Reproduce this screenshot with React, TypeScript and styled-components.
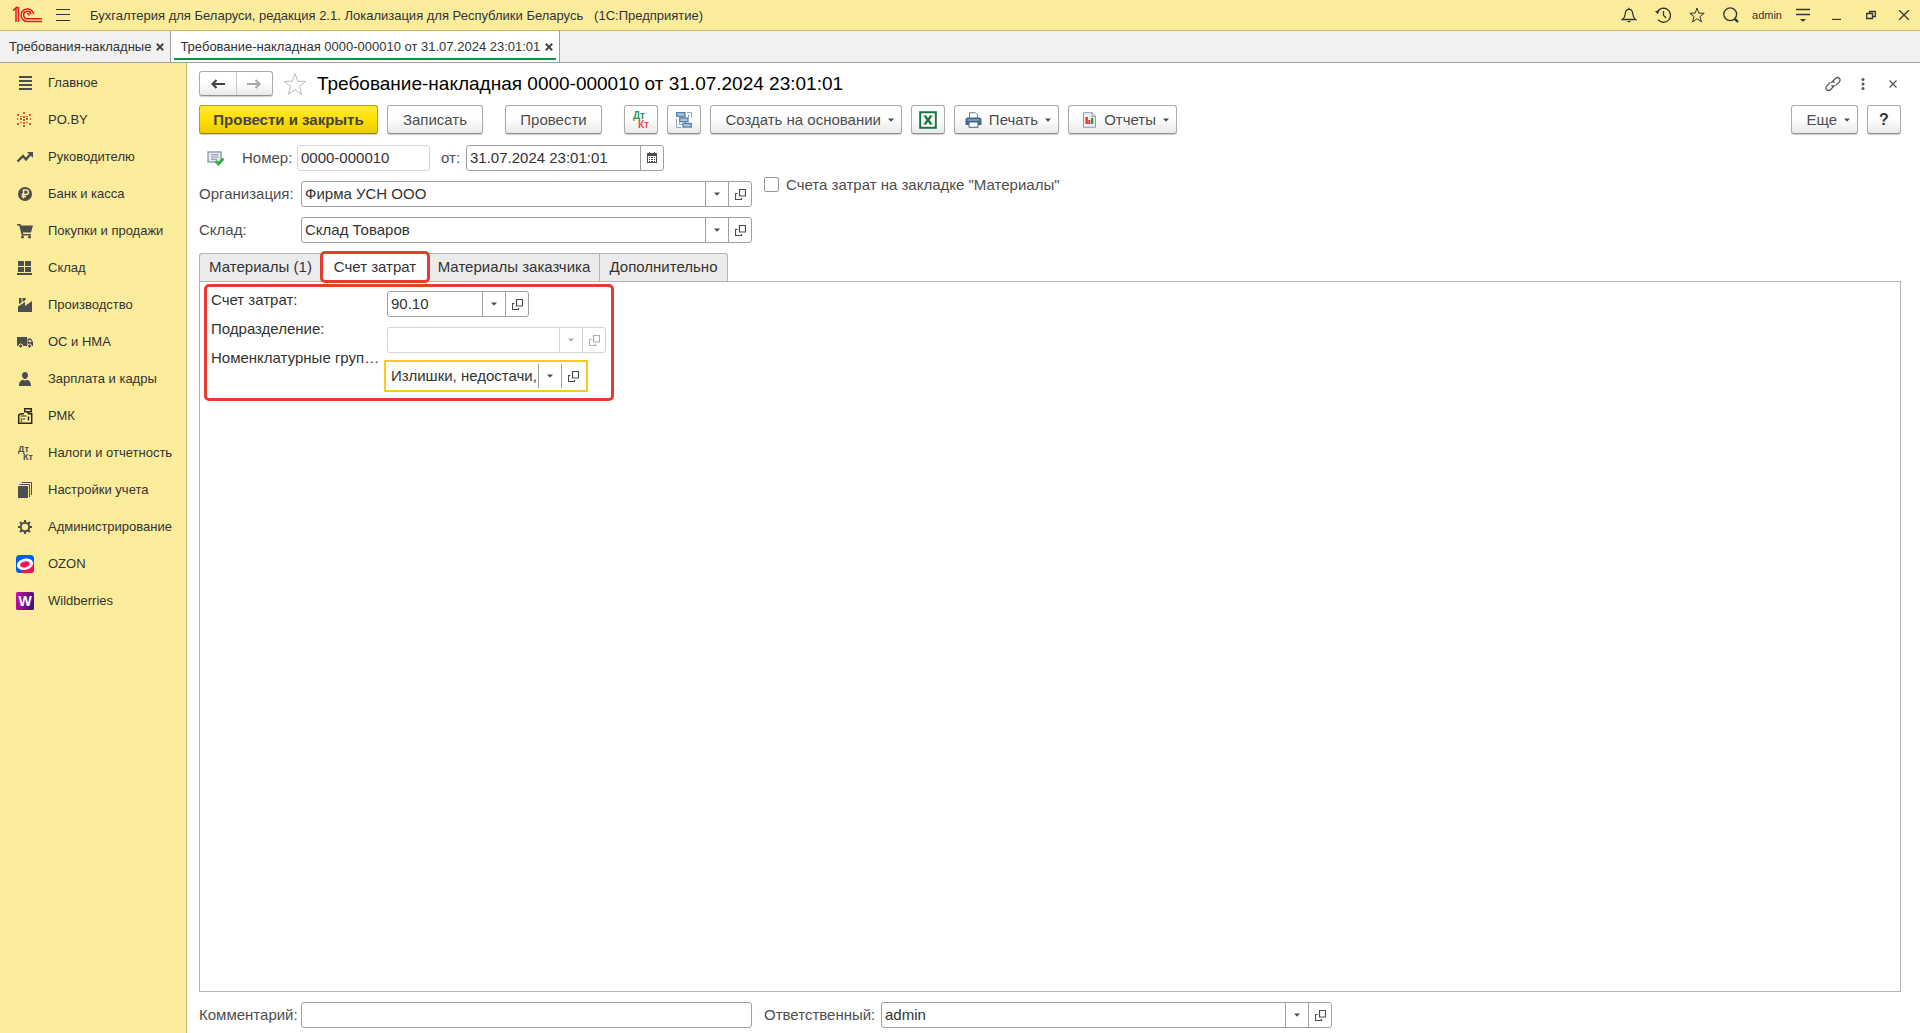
import React from "react";
import styled, { createGlobalStyle, css } from "styled-components";

const Global = createGlobalStyle`
  *, *::before, *::after { box-sizing: border-box; }
  body { margin: 0; background: #fff; }
  body, button, input { font-family: "Liberation Sans", Arial, sans-serif; }
  button { cursor: pointer; }
`;

const Page = styled.div`
  display: flex;
  flex-direction: column;
  min-height: 100vh;
  font-size: 15px;
  color: #4d4d4d;
`;

/* ---------- window header ---------- */

const TitleBar = styled.header`
  display: flex;
  align-items: center;
  height: 31px;
  padding-left: 12px;
  background: #fbec9c;
  border-bottom: 1px solid #c9b95f;
`;

const Logo = styled.svg`
  width: 32px;
  height: 18px;
  flex: none;
`;

const BareButton = styled.button<{ $w?: number }>`
  display: flex;
  align-items: center;
  justify-content: center;
  width: ${(p) => p.$w ?? 34}px;
  height: 30px;
  padding: 0;
  border: 0;
  background: none;
  color: #333;
`;

const AppTitle = styled.h1`
  flex: 1;
  margin: 0 0 0 8px;
  font-size: 13px;
  font-weight: 400;
  color: #333;
  white-space: pre;
`;

const WindowTools = styled.div`
  display: flex;
  align-items: center;
`;

const UserName = styled.span`
  padding: 0 4px;
  font-size: 11px;
  color: #333;
`;

const OpenTabs = styled.nav`
  display: flex;
  height: 32px;
  background: #f1f1f1;
  border-bottom: 1px solid #a0a0a0;
`;

const OpenTab = styled.div<{ $active?: boolean }>`
  display: flex;
  align-items: center;
  gap: 5px;
  padding: 0 6px 0 9px;
  border-right: 1px solid #a0a0a0;
  font-size: 13px;
  color: #333;
  ${(p) =>
    p.$active &&
    css`
      background: linear-gradient(#009646, #009646) center bottom 2px / calc(100% - 6px) 2px no-repeat #fff;
    `}
`;

const TabLink = styled.a`
  color: inherit;
  text-decoration: none;
  white-space: nowrap;
`;

const TabClose = styled.button`
  display: flex;
  padding: 0;
  border: 0;
  background: none;
  color: #444;
`;

/* ---------- body ---------- */

const Body = styled.div`
  display: flex;
  flex: 1;
`;

const Sidebar = styled.nav`
  flex: none;
  width: 187px;
  padding-top: 1px;
  background: #fbec9c;
  border-right: 1px solid #c9b95f;
`;

const SideLink = styled.a`
  display: flex;
  align-items: center;
  gap: 14px;
  height: 37px;
  padding-left: 16px;
  font-size: 13px;
  color: #333;
  text-decoration: none;
  white-space: nowrap;
  svg { width: 18px; height: 18px; flex: none; }
`;

const Main = styled.main`
  display: flex;
  flex: 1;
  flex-direction: column;
  min-width: 0;
  padding: 8px 19px 5px 12px;
`;

const HeadRow = styled.div`
  display: flex;
  align-items: center;
  height: 25px;
  margin-right: -7px;
`;

const raised = css`
  border: 1px solid #ababab;
  border-bottom-color: #919191;
  border-radius: 3px;
  background: linear-gradient(#fff 0%, #fff 45%, #e9e9e9 100%);
  box-shadow: 0 1px 1px rgba(0, 0, 0, 0.2);
`;

const History = styled.div`
  display: flex;
  width: 74px;
  height: 25px;
  ${raised}
`;

const HistoryButton = styled.button`
  display: flex;
  flex: 1;
  align-items: center;
  justify-content: center;
  padding: 0;
  border: 0;
  background: none;
  & + & { border-left: 1px solid #c8c8c8; }
`;

const FavButton = styled.button`
  display: flex;
  margin: 0 10px;
  padding: 0;
  border: 0;
  background: none;
`;

const DocTitle = styled.h2`
  flex: 1;
  margin: 0;
  font-size: 19px;
  font-weight: 400;
  color: #000;
  white-space: nowrap;
`;

const Toolbar = styled.div`
  display: flex;
  align-items: center;
  gap: 9px;
  margin-top: 9px;
`;

const ToolGroup = styled.div`
  display: flex;
  gap: 9px;
  & + & { margin-left: 13px; }
  &:last-child { margin-left: auto; }
`;

const ToolButton = styled.button<{ $w: number; $primary?: boolean; $menu?: boolean }>`
  display: flex;
  align-items: center;
  justify-content: ${(p) => (p.$menu ? "flex-end" : "center")};
  gap: 7px;
  width: ${(p) => p.$w}px;
  height: 29px;
  padding: 0 ${(p) => (p.$menu ? 7 : 0)}px 0 0;
  font-size: 15px;
  color: #4d4d4d;
  white-space: nowrap;
  ${raised}
  ${(p) =>
    p.$primary &&
    css`
      font-weight: 700;
      color: #444;
      border-color: #b5a100;
      border-bottom-color: #978600;
      background: linear-gradient(#ffe93a 0%, #ffe000 50%, #eccd00 100%);
    `}
`;

const Help = styled.span`
  font-size: 16px;
  font-weight: 700;
  color: #333;
`;

/* ---------- fields ---------- */

const FieldRow = styled.div`
  display: flex;
  align-items: center;
  height: 26px;
`;

const NumberRow = styled(FieldRow)`
  margin-top: 11px;
  padding-left: 8px;
`;

const Label = styled.label<{ $w?: number; $gap?: number }>`
  flex: none;
  width: ${(p) => (p.$w ? `${p.$w}px` : "auto")};
  margin-left: ${(p) => p.$gap ?? 0}px;
  padding-bottom: 2px;
  white-space: nowrap;
`;

const Box = styled.div<{ $w: number; $muted?: boolean; $focused?: boolean }>`
  display: flex;
  width: ${(p) => p.$w}px;
  height: 26px;
  border: 1px solid ${(p) => (p.$focused ? "transparent" : p.$muted ? "#d4d4d4" : "#a0a0a0")};
  border-radius: 3px;
  background: #fff;
  color: ${(p) => (p.$muted ? "#b0b0b0" : "#4d4d4d")};
  ${(p) =>
    p.$focused &&
    css`
      border-radius: 0;
      outline: 2px solid #f9cb1c;
      outline-offset: 1px;
    `}
`;

const TextInput = styled.input`
  flex: 1;
  min-width: 0;
  padding: 0 0 2px 3px;
  border: 0;
  outline: 0;
  background: none;
  font-size: 15px;
  color: #333;
`;

const InnerButton = styled.button<{ $muted?: boolean }>`
  display: flex;
  align-items: center;
  justify-content: center;
  flex: none;
  width: 23px;
  padding: 0;
  border: 0;
  border-left: 1px solid ${(p) => (p.$muted ? "#d4d4d4" : "#a0a0a0")};
  background: none;
  color: inherit;
`;

const HeaderFields = styled.div`
  display: flex;
  gap: 12px;
`;

const FieldStack = styled.div`
  display: flex;
  flex-direction: column;
  gap: 10px;
  padding-top: 10px;
`;

const CheckLabel = styled.label`
  display: flex;
  align-items: center;
  gap: 7px;
  height: 27px;
  white-space: nowrap;
`;

const CheckBox = styled.input`
  appearance: none;
  width: 15px;
  height: 15px;
  margin: 0;
  border: 1px solid #999;
  border-radius: 2px;
  background: #fff;
`;

/* ---------- form pages ---------- */

const PageTabs = styled.div`
  display: flex;
  margin-top: 10px;
`;

const PageTab = styled.button<{ $w: number; $active?: boolean }>`
  position: relative;
  width: ${(p) => p.$w}px;
  height: 28px;
  padding: 0 0 2px;
  border: 1px solid #b3b3b3;
  border-bottom: 0;
  border-right-width: 0;
  background: ${(p) => (p.$active ? "#fff" : "#ebebeb")};
  font-size: 15px;
  color: #333;
  white-space: nowrap;
  &:first-child { border-radius: 3px 0 0 0; }
  &:last-child { border-right-width: 1px; border-radius: 0 3px 0 0; }
  ${(p) =>
    p.$active &&
    css`
      &::after {
        content: "";
        position: absolute;
        inset: -3px -2px -2px -2px;
        border: 3px solid #e63c30;
        border-radius: 5px;
        z-index: 1;
      }
    `}
`;

const PagePanel = styled.section`
  flex: 1;
  border: 1px solid #b3b3b3;
  color: #333;
`;

const Highlight = styled.div`
  display: flex;
  width: 410px;
  height: 117px;
  margin: 2px 0 0 4px;
  padding-left: 4px;
  border: 3px solid #e63c30;
  border-radius: 5px;
`;

const LabelColumn = styled.div`
  display: flex;
  flex-direction: column;
  gap: 2px;
  width: 176px;
  line-height: 25px;
`;

const FieldColumn = styled.div`
  display: flex;
  flex-direction: column;
  gap: 10px;
  padding-top: 4px;
`;

const Footer = styled.div`
  display: flex;
  gap: 12px;
  margin-top: 10px;
`;

/* ---------- icons ---------- */

const Caret = () => (
  <svg width="6" height="4" viewBox="0 0 6 4" aria-hidden="true">
    <path d="M0 .5h6L3 3.800z" fill="currentColor" />
  </svg>
);

const OpenIcon = () => (
  <svg width="11" height="11" viewBox="0 0 11 11" fill="none" stroke="currentColor" strokeWidth="1.200" aria-hidden="true">
    <path d="M4.500.5h6v6.500h-6z" />
    <path d="M2.500 4.500h-2v6h6v-1.500" />
  </svg>
);

const SmallX = () => (
  <svg width="8" height="8" viewBox="0 0 8 8" stroke="currentColor" strokeWidth="2" aria-hidden="true">
    <path d="M.8.8l6.400 6.400M7.200.8L.8 7.200" />
  </svg>
);

const Arrow = ({ forward }: { forward?: boolean }) => (
  <svg width="14" height="10" viewBox="0 0 14 10" aria-hidden="true">
    <path
      d={forward ? "M0 5h12M8.500 1l4 4-4 4" : "M14 5H2M5.500 1l-4 4 4 4"}
      fill="none"
      stroke={forward ? "#aaa" : "#444"}
      strokeWidth="2.200"
    />
  </svg>
);

const Star = ({ size, color }: { size: number; color: string }) => (
  <svg width={size} height={size} viewBox="0 0 24 24" fill="none" stroke={color} strokeWidth={24 / size} aria-hidden="true">
    <path d="M12 1.500l2.700 7.700 8.100.2-6.400 5 2.300 7.900-6.700-4.700-6.700 4.700 2.300-7.900-6.400-5 8.100-.2z" />
  </svg>
);

const line = { fill: "none", stroke: "currentColor", strokeWidth: 1.3 } as const;

const BellIcon = () => (
  <svg width="16" height="16" viewBox="0 0 16 16" {...line}>
    <path d="M1.500 12.500h13c-2-1.500-2.500-3-2.700-5.500C11.600 4.200 10.600 2.300 8 2.300S4.400 4.200 4.200 7c-.2 2.500-.7 4-2.700 5.500zM8 2.300V.8" />
    <path d="M5.500 14h5L8 15.600z" fill="currentColor" stroke="none" />
  </svg>
);

const ClockIcon = () => (
  <svg width="16" height="16" viewBox="0 0 16 16" {...line}>
    <path d="M2.300 5A7 7 0 1 1 3 12.600M8.500 4v4.500l2.500 2.300" />
    <path d="M0 4.200l4.600-.6-1.800 3.600z" fill="currentColor" stroke="none" />
  </svg>
);

const SearchIcon = () => (
  <svg width="16" height="16" viewBox="0 0 16 16" {...line}>
    <circle cx="7.200" cy="7.200" r="6.400" />
    <path d="M11.800 11.800l3.200 3.200" strokeWidth="2.400" />
  </svg>
);

const ServiceIcon = () => (
  <svg width="14" height="14" viewBox="0 0 14 14" {...line}>
    <path d="M0 1.500h14M0 6.500h14" />
    <path d="M4 11h6L7 13.800z" fill="currentColor" stroke="none" />
  </svg>
);

const LinkIcon = () => (
  <svg width="16" height="16" viewBox="0 0 16 16" fill="none" stroke="#555" strokeWidth="1.300">
    <path d="M6.300 6.800L10.600 2.300a2.500 2.500 0 0 1 3.700 0 2.500 2.500 0 0 1 0 3.600L10.600 9.600M9.600 6.600a2.600 2.600 0 0 0-1.600-.6M9.700 9.200L5.400 13.700a2.500 2.500 0 0 1-3.700 0 2.500 2.500 0 0 1 0-3.600L5.400 6.400M6.400 9.400a2.600 2.600 0 0 0 1.600.6" />
  </svg>
);

const CalendarIcon = () => (
  <svg width="10" height="12" viewBox="0 0 10 12" fill="#4d4d4d">
    <path d="M2 0h1v1h4V0h1v1h2v10H0V1h2z" />
    <path d="M1 4h8v6H1z" fill="#fff" />
    <path d="M2 5h1v1H2zM4 5h2v1H4zM7 5h1v1H7zM2 7h1v1H2zM4 7h2v1H4zM7 7h1v1H7zM2 9h1v1H2zM4 9h2v1H4zM7 9h1v1H7z" />
  </svg>
);

const PostedIcon = () => (
  <svg width="17" height="15" viewBox="0 0 17 15">
    <path d="M1 1h13v10H1z" fill="#e6ebef" stroke="#94a2b0" strokeWidth="1.500" />
    <path d="M4 3.800h7.500M4 6h7.500M4 8.200h6" stroke="#8391a0" strokeWidth="1.100" />
    <path d="M8.500 10l3 3 5-5.500" fill="none" stroke="#2fb344" strokeWidth="2.800" />
  </svg>
);

const DtKtIcon = ({ dt, kt }: { dt: string; kt: string }) => (
  <svg width="18" height="18" viewBox="0 0 18 18" fontFamily="Liberation Sans" fontWeight="700" aria-hidden="true">
    <text x="1" y="8" fontSize="10" fill={dt}>Дт</text>
    <text x="6" y="17" fontSize="10" fill={kt}>Кт</text>
  </svg>
);

const StructureIcon = () => (
  <svg width="16" height="16" viewBox="0 0 16 16" fill="none">
    <path d="M11 .500h4.500v5M.500 7v8.500h4.500M12.500 2.500v3M3.500 10.500v2H6" stroke="#86a9c6" />
    <path d="M.700.700h8.300v3.600H.700zM3.700 6h8.300v3.600H3.700zM7 11.500h8.300v3.600H7z" fill="#a9c7de" stroke="#5585ad" strokeWidth="1.300" />
    <path d="M6 4.500V6M9.500 9.800v1.500" stroke="#5585ad" />
  </svg>
);

const ExcelIcon = () => (
  <svg width="18" height="18" viewBox="0 0 18 18">
    <path d="M1.200 1.200h15.600v15.600H1.200z" fill="#fff" stroke="#14773f" strokeWidth="2" />
    <path d="M6 5l6 8M12 5l-6 8" stroke="#14773f" strokeWidth="2.300" />
    <path d="M4.500 5h3M10.500 5h3M4.500 13h3M10.500 13h3" stroke="#14773f" />
  </svg>
);

const PrinterIcon = () => (
  <svg width="17" height="16" viewBox="0 0 17 16">
    <path d="M4.500 6V.7h6l2 2V6" fill="#fff" stroke="#6a88a3" />
    <path d="M2 5.500h13l1.500 1.500v6H.5V7z" fill="#42688c" />
    <path d="M4 10h9v5.300H4z" fill="#fff" stroke="#42688c" />
    <path d="M2.500 8h12" stroke="#a9c1d6" />
  </svg>
);

const ReportIcon = () => (
  <svg width="15" height="16" viewBox="0 0 15 16">
    <path d="M1.500.7h8.500L13.500 4v11.300h-12z" fill="#eef2f5" stroke="#8d9bab" />
    <path d="M10 .7V4.500h3.500" fill="none" stroke="#8d9bab" />
    <path d="M3.500 5h2.300v7H3.500z" fill="#e02b2b" />
    <path d="M6.300 8h2v4h-2z" fill="#e02b2b" />
    <path d="M9 6h2.300v6H9z" fill="#2a9d43" />
  </svg>
);

const C = "#4d4d4d";
const sideIcons: Record<string, React.ReactNode> = {
  main: <path d="M3 2h13v2H3zM3 6h13v2H3zM3 10h13v2H3zM3 14h13v2H3z" fill={C} />,
  po: (
    <path
      d="M7 1h2v2H7zM7 5h2v2H7zM7 8h2v2H7zM7 11h2v2H7zM7 14h2v2H7zM1 3h2v2H1zM4 5h2v1H4zM1 7h1v2H1zM4 7h2v2H4zM1 12h2v2H1zM4 11h2v1H4zM13 3h2v2h-2zM10 5h2v1h-2zM14 7h1v2h-1zM10 7h2v2h-2zM13 12h2v2h-2zM10 11h2v1h-2z"
      fill="#dc5535"
    />
  ),
  chief: (
    <g>
      <path d="M1.500 13.500L7 8l3 3.500L14.500 6" fill="none" stroke={C} strokeWidth="2.400" />
      <path d="M11 4h6v6z" fill={C} />
    </g>
  ),
  bank: (
    <g>
      <circle cx="9" cy="9" r="7" fill={C} />
      <path d="M7.500 13.500V5h2.700a2.200 2.200 0 0 1 0 4.400H5.500M5.500 11.500H10" fill="none" stroke="#fbec9c" strokeWidth="1.500" />
    </g>
  ),
  cart: (
    <g fill={C}>
      <path d="M1 2h3.500l.6 1.500H17l-2 7H6.800l.4 1.500H15v1.500H5.700L3.300 3.500H1z" />
      <circle cx="6.500" cy="15" r="1.500" />
      <circle cx="13.500" cy="15" r="1.500" />
    </g>
  ),
  store: <path d="M2 2h6v5H2zM9 2h6v5H9zM2 8h6v5H2zM9 8h6v5H9zM1 14h15v2H1z" fill={C} />,
  factory: <path d="M2 16V10.500L9 6v4l7-5v11zM3 2h2.500v4.500L3 8zM6.500 2H10l-1 2.500-2.500 1.500z" fill={C} />,
  truck: (
    <g>
      <path d="M1 4h10v9H1zM11.500 5.500h3.500l2 3.500v4h-5.500z" fill={C} />
      <path d="M12.700 7h1.800l1.200 2h-3z" fill="#fbec9c" />
      <circle cx="4.700" cy="13" r="2" fill={C} stroke="#fbec9c" />
      <circle cx="13.500" cy="13" r="2" fill={C} stroke="#fbec9c" />
    </g>
  ),
  person: <path d="M9 2c2 0 3 1.300 3 3.300S10.700 9 9 9 6 7.300 6 5.300 7 2 9 2zM3 16c0-4 1.500-5.500 4-6.200 1.200 1 2.800 1 4 0 2.500.7 4 2.200 4 6.200z" fill={C} />,
  cash: (
    <g fill="none" stroke="#2b2817" strokeWidth="1.500">
      <path d="M8 6.700H5L2.700 8v8.300h13V6.700H12M8.700 1.700h6.600v3H8.700zM12 4.700v2" />
      <path d="M4.500 9h6M5.500 11v4M8 11v2" stroke="#6c6540" />
      <path d="M12.500 9.500v4" />
    </g>
  ),
  tax: (
    <g fill={C} fontFamily="Liberation Sans" fontWeight="700" fontSize="9">
      <text x="2" y="8">Дт</text>
      <text x="7" y="16">Кт</text>
    </g>
  ),
  books: (
    <g>
      <path d="M2 5h10v12H2z" fill={C} />
      <path d="M3.500 3.500h10V16M5.500 1.500h10V14" fill="none" stroke={C} />
    </g>
  ),
  gear: (
    <g fill="none" stroke={C}>
      <circle cx="9" cy="9" r="4.200" strokeWidth="2" />
      <path
        d="M9 4.500V2M9 13.500V16M4.500 9H2M13.500 9H16M5.800 5.800L4 4M12.200 12.200L14 14M5.800 12.200L4 14M12.200 5.800L14 4"
        strokeWidth="2.200"
      />
    </g>
  ),
  ozon: (
    <g>
      <rect width="18" height="18" rx="3.500" fill="#005bff" />
      <path d="M18 9v5.500a3.500 3.500 0 0 1-3.500 3.500H5c-.5-3 0-3 4-4z" fill="#f91155" />
      <g transform="rotate(-14 9 9.300)">
        <ellipse cx="9" cy="9.300" rx="8.200" ry="5.600" fill="#fff" />
        <ellipse cx="9" cy="9.300" rx="5" ry="3" fill="#f91155" />
      </g>
    </g>
  ),
  wb: (
    <g>
      <defs>
        <linearGradient id="wb" x1="0" y1="0" x2="1" y2="0.300">
          <stop offset="0" stopColor="#cb11ab" />
          <stop offset="1" stopColor="#481173" />
        </linearGradient>
      </defs>
      <rect width="18" height="18" rx="1.500" fill="url(#wb)" />
      <text x="9" y="14" fontFamily="Liberation Sans" fontWeight="700" fontSize="14" fill="#fff" textAnchor="middle">W</text>
    </g>
  ),
};

const sections: [string, string][] = [
  ["main", "Главное"],
  ["po", "PO.BY"],
  ["chief", "Руководителю"],
  ["bank", "Банк и касса"],
  ["cart", "Покупки и продажи"],
  ["store", "Склад"],
  ["factory", "Производство"],
  ["truck", "ОС и НМА"],
  ["person", "Зарплата и кадры"],
  ["cash", "РМК"],
  ["tax", "Налоги и отчетность"],
  ["books", "Настройки учета"],
  ["gear", "Администрирование"],
  ["ozon", "OZON"],
  ["wb", "Wildberries"],
];

type ComboProps = { id: string; value: string; width: number; disabled?: boolean; focused?: boolean };

const Combo = ({ id, value, width, disabled, focused }: ComboProps) => (
  <Box $w={width} $muted={disabled} $focused={focused}>
    <TextInput id={id} defaultValue={value} disabled={disabled} />
    <InnerButton $muted={disabled} disabled={disabled} aria-label="Выбрать из списка"><Caret /></InnerButton>
    <InnerButton $muted={disabled} disabled={disabled} aria-label="Открыть"><OpenIcon /></InnerButton>
  </Box>
);

export default function App() {
  return (
    <Page>
      <Global />
      <TitleBar>
        <Logo viewBox="0 0 32 18" fill="none" stroke="#d9201f" strokeWidth="1.500">
          <path d="M1 4.700l3-2.900V16M3.700 1.800h2.700V16" />
          <path d="M21.600 8.200A6.300 6.300 0 1 0 15.500 15.500H30" />
          <path d="M18.900 8.200A3.700 3.700 0 1 0 15.500 12.800H30M15 7.500a2 2 0 0 1 2 2" />
        </Logo>
        <BareButton $w={38} aria-label="Меню">
          <svg width="14" height="12" viewBox="0 0 14 12" stroke="currentColor">
            <path d="M0 .5h14M0 5.500h14M0 11.500h14" />
          </svg>
        </BareButton>
        <AppTitle>{"Бухгалтерия для Беларуси, редакция 2.1. Локализация для Республики Беларусь   (1С:Предприятие)"}</AppTitle>
        <WindowTools>
          <BareButton aria-label="Уведомления"><BellIcon /></BareButton>
          <BareButton aria-label="История"><ClockIcon /></BareButton>
          <BareButton aria-label="Избранное"><Star size={16} color="#333" /></BareButton>
          <BareButton aria-label="Поиск"><SearchIcon /></BareButton>
          <UserName>admin</UserName>
          <BareButton aria-label="Сервис"><ServiceIcon /></BareButton>
          <BareButton aria-label="Свернуть">
            <svg width="10" height="10" viewBox="0 0 10 10" {...line}><path d="M0 9.500h9" /></svg>
          </BareButton>
          <BareButton aria-label="Развернуть">
            <svg width="10" height="10" viewBox="0 0 10 10" {...line}>
              <path d="M.7 3.500h5.800v5H.7zM3.500 3.500v-2h5.800v5H6.500" />
            </svg>
          </BareButton>
          <BareButton $w={32} aria-label="Закрыть программу">
            <svg width="10" height="10" viewBox="0 0 10 10" {...line}><path d="M0 0l10 10M10 0L0 10" /></svg>
          </BareButton>
        </WindowTools>
      </TitleBar>

      <OpenTabs>
        <OpenTab>
          <TabLink href="#list">Требования-накладные</TabLink>
          <TabClose aria-label="Закрыть"><SmallX /></TabClose>
        </OpenTab>
        <OpenTab $active>
          <TabLink href="#doc">Требование-накладная 0000-000010 от 31.07.2024 23:01:01</TabLink>
          <TabClose aria-label="Закрыть"><SmallX /></TabClose>
        </OpenTab>
      </OpenTabs>

      <Body>
        <Sidebar>
          {sections.map(([key, name]) => (
            <SideLink key={key} href={`#${key}`}>
              <svg viewBox="0 0 18 18" aria-hidden="true">{sideIcons[key]}</svg>
              {name}
            </SideLink>
          ))}
        </Sidebar>

        <Main>
          <HeadRow>
            <History>
              <HistoryButton aria-label="Назад"><Arrow /></HistoryButton>
              <HistoryButton aria-label="Вперед"><Arrow forward /></HistoryButton>
            </History>
            <FavButton aria-label="В избранное"><Star size={24} color="#b4bac2" /></FavButton>
            <DocTitle>Требование-накладная 0000-000010 от 31.07.2024 23:01:01</DocTitle>
            <BareButton $w={30} aria-label="Ссылка"><LinkIcon /></BareButton>
            <BareButton $w={30} aria-label="Ещё">
              <svg width="4" height="12" viewBox="0 0 4 12" fill="#555">
                <circle cx="2" cy="1.500" r="1.500" /><circle cx="2" cy="6" r="1.500" /><circle cx="2" cy="10.500" r="1.500" />
              </svg>
            </BareButton>
            <BareButton $w={30} aria-label="Закрыть форму">
              <svg width="8" height="8" viewBox="0 0 8 8" stroke="#555" strokeWidth="1.200"><path d="M.5.5l7 7M7.500.5l-7 7" /></svg>
            </BareButton>
          </HeadRow>

          <Toolbar>
            <ToolGroup>
              <ToolButton $w={179} $primary>Провести и закрыть</ToolButton>
              <ToolButton $w={96}>Записать</ToolButton>
            </ToolGroup>
            <ToolGroup><ToolButton $w={97}>Провести</ToolButton></ToolGroup>
            <ToolGroup>
              <ToolButton $w={34} aria-label="Проводки"><DtKtIcon dt="#1d9a50" kt="#e2504a" /></ToolButton>
              <ToolButton $w={34} aria-label="Структура"><StructureIcon /></ToolButton>
              <ToolButton $w={192} $menu>Создать на основании <Caret /></ToolButton>
              <ToolButton $w={34} aria-label="Excel"><ExcelIcon /></ToolButton>
              <ToolButton $w={105} $menu><PrinterIcon />Печать <Caret /></ToolButton>
              <ToolButton $w={109} $menu><ReportIcon />Отчеты <Caret /></ToolButton>
            </ToolGroup>
            <ToolGroup>
              <ToolButton $w={67} $menu>Еще <Caret /></ToolButton>
              <ToolButton $w={34} aria-label="Справка"><Help>?</Help></ToolButton>
            </ToolGroup>
          </Toolbar>

          <NumberRow>
            <PostedIcon />
            <Label htmlFor="num" $gap={18} $w={55}>Номер:</Label>
            <Box $w={133} $muted><TextInput id="num" defaultValue="0000-000010" /></Box>
            <Label htmlFor="date" $gap={11} $w={25}>от:</Label>
            <Box $w={198}>
              <TextInput id="date" defaultValue="31.07.2024 23:01:01" />
              <InnerButton aria-label="Календарь"><CalendarIcon /></InnerButton>
            </Box>
          </NumberRow>

          <HeaderFields>
            <FieldStack>
              <FieldRow>
                <Label htmlFor="org" $w={102}>Организация:</Label>
                <Combo id="org" value="Фирма УСН ООО" width={451} />
              </FieldRow>
              <FieldRow>
                <Label htmlFor="store" $w={102}>Склад:</Label>
                <Combo id="store" value="Склад Товаров" width={451} />
              </FieldRow>
            </FieldStack>
            <CheckLabel>
              <CheckBox type="checkbox" />
              Счета затрат на закладке "Материалы"
            </CheckLabel>
          </HeaderFields>

          <PageTabs>
            <PageTab $w={122}>Материалы (1)</PageTab>
            <PageTab $w={107} $active>Счет затрат</PageTab>
            <PageTab $w={171}>Материалы заказчика</PageTab>
            <PageTab $w={129}>Дополнительно</PageTab>
          </PageTabs>
          <PagePanel>
            <Highlight>
              <LabelColumn>
                <Label htmlFor="account">Счет затрат:</Label>
                <Label htmlFor="dept">Подразделение:</Label>
                <Label htmlFor="groups">Номенклатурные груп…</Label>
              </LabelColumn>
              <FieldColumn>
                <Combo id="account" value="90.10" width={142} />
                <Combo id="dept" value="" width={219} disabled />
                <Combo id="groups" value="Излишки, недостачи," width={198} focused />
              </FieldColumn>
            </Highlight>
          </PagePanel>

          <Footer>
            <FieldRow>
              <Label htmlFor="comment" $w={102}>Комментарий:</Label>
              <Box $w={451}><TextInput id="comment" /></Box>
            </FieldRow>
            <FieldRow>
              <Label htmlFor="resp" $w={117}>Ответственный:</Label>
              <Combo id="resp" value="admin" width={451} />
            </FieldRow>
          </Footer>
        </Main>
      </Body>
    </Page>
  );
}
